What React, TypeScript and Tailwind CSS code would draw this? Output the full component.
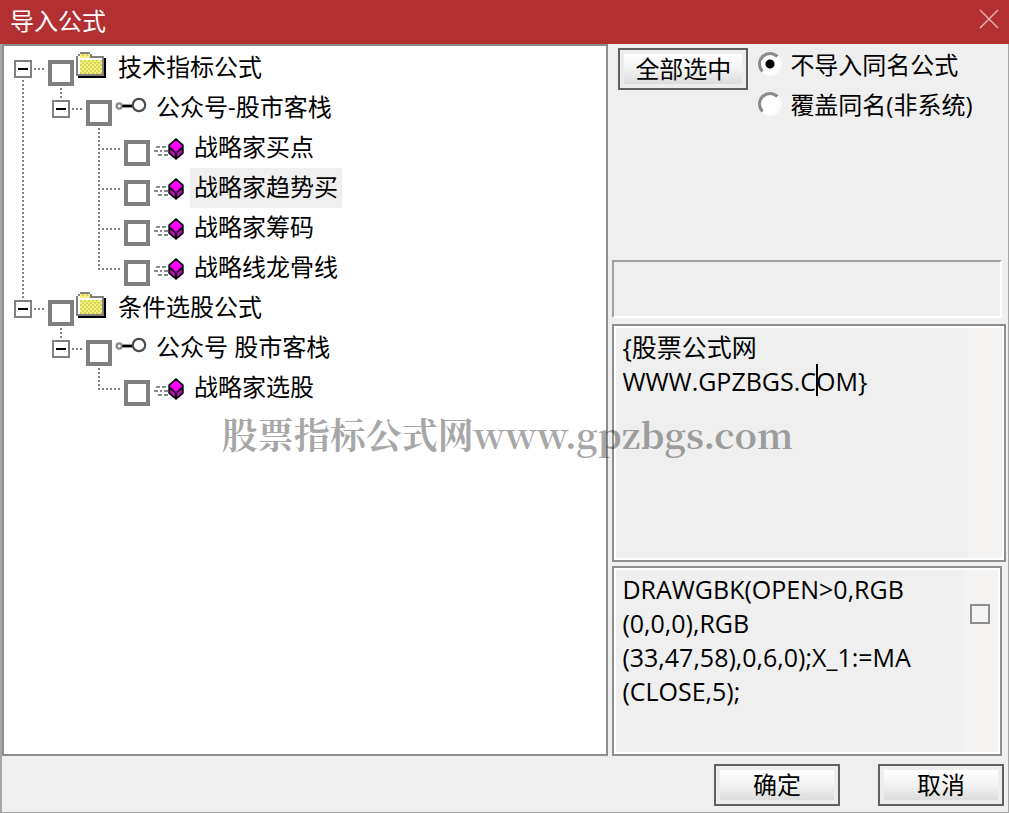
import React, { useState } from 'react';

type Kind = 'folder' | 'key' | 'gem';

interface TreeItem {
  id: string;
  label: string;
  kind: Kind;
  children?: TreeItem[];
}

const TREE: TreeItem[] = [
  {
    id: 'tech',
    label: '技术指标公式',
    kind: 'folder',
    children: [
      {
        id: 'tech-group',
        label: '公众号-股市客栈',
        kind: 'key',
        children: [
          { id: 'buy-point', label: '战略家买点', kind: 'gem' },
          { id: 'trend-buy', label: '战略家趋势买', kind: 'gem' },
          { id: 'chips', label: '战略家筹码', kind: 'gem' },
          { id: 'dragon-line', label: '战略线龙骨线', kind: 'gem' },
        ],
      },
    ],
  },
  {
    id: 'cond',
    label: '条件选股公式',
    kind: 'folder',
    children: [
      {
        id: 'cond-group',
        label: '公众号 股市客栈',
        kind: 'key',
        children: [{ id: 'pick', label: '战略家选股', kind: 'gem' }],
      },
    ],
  },
];

const FORMULA_NOTE = '{股票公式网\nWWW.GPZBGS.COM}';
const FORMULA_SOURCE = 'DRAWGBK(OPEN>0,RGB\n(0,0,0),RGB\n(33,47,58),0,6,0);X_1:=MA\n(CLOSE,5);';

const allIds = (items: TreeItem[]): string[] =>
  items.flatMap((item) => [item.id, ...allIds(item.children ?? [])]);

const FolderIcon = () => (
  <svg className="w-[38px] h-10 shrink-0" viewBox="0 0 19 20" shapeRendering="crispEdges" aria-hidden="true">
    <defs>
      <pattern id="dither" width="2" height="2" patternUnits="userSpaceOnUse">
        <rect width="2" height="2" fill="#f2f27c" />
        <rect width="1" height="1" fill="#d8d35c" />
        <rect x="1" y="1" width="1" height="1" fill="#d8d35c" />
      </pattern>
    </defs>
    <path d="M14 5h1v10H1v-1h13z" fill="#000" />
    <path d="M2 2h5v1h1v1h6v10H0V4h1V3h1z" fill="#808080" />
    <path d="M2 3h5v1H2z" fill="url(#dither)" />
    <path d="M1 4h6v1h6v1H1z" fill="#fff" />
    <path d="M2 4h5v1H2z" fill="#f2f27c" />
    <path d="M1 5h12v8H1z" fill="#fff" />
    <path d="M2 6h11v7H2z" fill="url(#dither)" />
  </svg>
);

const KeyIcon = () => (
  <svg className="w-[38px] h-10 shrink-0" viewBox="0 0 19 20" fill="none" aria-hidden="true">
    <circle cx="2.6" cy="9" r="1.3" stroke="#888" strokeWidth="1.1" />
    <path d="M4.2 9h5" stroke="#000" strokeWidth="1.4" />
    <circle cx="12.5" cy="8.5" r="3.1" stroke="#4c4c4c" strokeWidth="1.1" />
  </svg>
);

const GemIcon = () => (
  <svg className="w-[38px] h-10 shrink-0" viewBox="0 0 19 20" aria-hidden="true">
    <path
      d="M2 9h2v1H2zM5 9h2v1H5zM1 11h2v1H1zM4 11h1v1H4zM6 11h2v1H6zM3 13h2v1H3zM6 13h2v1H6z"
      fill="#8a8a8a"
      shapeRendering="crispEdges"
    />
    <path d="M12 5.6l3.4 3v4L12 15.4l-3.4-2.8v-4z" fill="#d000d0" />
    <path d="M12 5.6l3.4 3-3.4 3.6-3.4-3.6z" fill="#ff00ff" />
    <path
      d="M12 5.6l3.4 3v4L12 15.4l-3.4-2.8v-4zM9 9.8l3 3 3-3M12 12.8v2.4"
      fill="none"
      stroke="#000"
      strokeWidth="0.9"
    />
  </svg>
);

const ICONS: Record<Kind, () => React.ReactElement> = {
  folder: FolderIcon,
  key: KeyIcon,
  gem: GemIcon,
};

// One column of the tree's dotted connector lines
const Guide = ({ top, bottom, right }: { top?: boolean; bottom?: boolean; right?: boolean }) => (
  <svg
    className="w-[38px] h-10 shrink-0 overflow-visible"
    viewBox="0 0 38 40"
    stroke="#808080"
    strokeWidth="2"
    strokeDasharray="2 2"
    shapeRendering="crispEdges"
    aria-hidden="true"
  >
    {top && <path d="M19 0v22" />}
    {bottom && <path d="M19 20v20" />}
    {right && <path d="M22 21h20" />}
  </svg>
);

const Expander = ({ open, top, bottom }: { open: boolean; top: boolean; bottom: boolean }) => (
  <svg
    className="w-[38px] h-10 overflow-visible"
    viewBox="0 0 38 40"
    stroke="#808080"
    strokeWidth="2"
    fill="none"
    shapeRendering="crispEdges"
    aria-hidden="true"
  >
    {top && <path d="M19 0v10" strokeDasharray="2 2" />}
    {bottom && <path d="M19 32v8" strokeDasharray="2 2" />}
    <path d="M30 21h10" strokeDasharray="2 2" />
    <rect x="11" y="13" width="16" height="16" fill="#fff" />
    <path d="M14 21h10" stroke="#000" />
    {!open && <path d="M19 16v10" stroke="#000" />}
  </svg>
);

interface BranchProps {
  items: TreeItem[];
  // for every ancestor column: does its line run on below?
  lines: boolean[];
  checked: string[];
  closed: string[];
  selected: string;
  onCheck: (id: string) => void;
  onToggle: (id: string) => void;
  onSelect: (id: string) => void;
}

const Branch = (props: BranchProps) => {
  const { items, lines, checked, closed, selected, onCheck, onToggle, onSelect } = props;

  return (
    <ul>
      {items.map((item, i) => {
        const Icon = ICONS[item.kind];
        const open = !closed.includes(item.id);
        const last = i === items.length - 1;
        const hasTop = lines.length > 0 || i > 0;
        return (
          <li key={item.id}>
            <div className="flex h-10">
              {lines.map((line, n) => (
                <Guide key={n} top={line} bottom={line} />
              ))}
              {item.children ? (
                <button
                  type="button"
                  className="shrink-0"
                  aria-expanded={open}
                  aria-label={item.label}
                  onClick={() => onToggle(item.id)}
                >
                  <Expander open={open} top={hasTop} bottom={!last} />
                </button>
              ) : (
                <Guide top bottom={!last} right />
              )}
              <input
                type="checkbox"
                aria-label={item.label}
                checked={checked.includes(item.id)}
                onChange={() => onCheck(item.id)}
                className="appearance-none shrink-0 size-[26px] mt-3 ml-1.5 mr-0.5 border-4 border-[#808080] bg-white checked:bg-[#404040]"
              />
              <Icon />
              <button
                type="button"
                onClick={() => onSelect(item.id)}
                className={
                  selected === item.id
                    ? 'h-10 px-1 pb-0.5 whitespace-nowrap bg-[#efefef]'
                    : 'h-10 px-1 pb-0.5 whitespace-nowrap'
                }
              >
                {item.label}
              </button>
            </div>
            {item.children && open && (
              <Branch {...props} items={item.children} lines={[...lines, !last]} />
            )}
          </li>
        );
      })}
    </ul>
  );
};

const DialogButton = ({ children, onClick, className }: { children: string; onClick?: () => void; className: string }) => (
  <button
    type="button"
    onClick={onClick}
    className={`${className} h-[42px] shrink-0 border-2 border-[#606060] bg-[#ededeb] p-1`}
  >
    <span className="flex h-full items-center justify-center bg-linear-to-b from-white via-[#f2f2f2] to-[#dcdcdc]">
      {children}
    </span>
  </button>
);

const RADIO_CLASS =
  'appearance-none shrink-0 size-6 mt-1.5 rounded-full border-[3px] border-t-[#8c8c8c] border-l-[#8c8c8c] border-b-[#fafafa] border-r-[#fafafa] bg-white checked:bg-[radial-gradient(circle,#000_4px,#fff_5px)]';

const App = () => {
  const [checked, setChecked] = useState<string[]>([]);
  const [closed, setClosed] = useState<string[]>([]);
  const [selected, setSelected] = useState('trend-buy');
  const [mode, setMode] = useState('skip');

  const flip = (list: string[], id: string) =>
    list.includes(id) ? list.filter((x) => x !== id) : [...list, id];

  return (
    <div className="relative min-h-screen flex flex-col bg-[#efefef] text-black text-2xl font-['Open_Sans','Noto_Sans_CJK_SC',sans-serif]">
      {/* Title bar */}
      <header className="flex h-11 items-center justify-between bg-[#b22f32] pl-2.5 pr-2.5 text-white">
        <h1 className="pb-0.5">导入公式</h1>
        <button type="button" aria-label="关闭" className="-mt-1.5">
          <svg className="size-5" viewBox="0 0 20 20" stroke="#eab4b4" strokeWidth="1.4" aria-hidden="true">
            <path d="M1 1l18 18M19 1L1 19" />
          </svg>
        </button>
      </header>

      <div className="flex flex-1 flex-col border-l-2 border-r border-b border-[#a5a5a5]">
        <main className="flex flex-1 gap-1">
          {/* Formula tree */}
          <section className="flex-[606] min-w-0 border-2 border-[#8e8e8e] bg-white pt-0.5">
            <Branch
              items={TREE}
              lines={[]}
              checked={checked}
              closed={closed}
              selected={selected}
              onCheck={(id) => setChecked(flip(checked, id))}
              onToggle={(id) => setClosed(flip(closed, id))}
              onSelect={setSelected}
            />
          </section>

          <section className="flex flex-[396] min-w-0 flex-col pr-0.5">
            <div className="flex h-[216px] gap-2.5 pl-1.5 pt-0.5">
              <DialogButton className="w-[130px] mt-0.5" onClick={() => setChecked(allIds(TREE))}>
                全部选中
              </DialogButton>
              <div className="whitespace-nowrap">
                <label className="flex h-10 gap-2 leading-[38px]">
                  <input
                    type="radio"
                    name="mode"
                    checked={mode === 'skip'}
                    onChange={() => setMode('skip')}
                    className={RADIO_CLASS}
                  />
                  不导入同名公式
                </label>
                <label className="flex h-10 gap-2 leading-[38px]">
                  <input
                    type="radio"
                    name="mode"
                    checked={mode === 'overwrite'}
                    onChange={() => setMode('overwrite')}
                    className={RADIO_CLASS}
                  />
                  覆盖同名(非系统)
                </label>
              </div>
            </div>

            <div className="h-[58px] mr-1 border-2 border-t-[#a0a0a0] border-l-[#a0a0a0] border-b-white border-r-white" />

            {/* Note */}
            <div className="relative flex flex-[238] mt-1.5 border-2 border-[#8e8e8e]">
              <div className="flex flex-1 border-2 border-white">
                <textarea
                  aria-label="公式说明"
                  defaultValue={FORMULA_NOTE}
                  spellCheck={false}
                  className="flex-1 min-w-0 resize-none overflow-hidden bg-transparent pl-1.5 pt-0.5 text-[25px] leading-[34px] outline-none"
                />
                <div className="w-[34px] bg-[#f4f3f2]" />
              </div>
              <div className="absolute left-[202px] top-[38px] h-8 w-0.5 bg-black" />
            </div>

            {/* Source */}
            <div className="flex flex-[190] mt-1 mr-1 border-2 border-[#8e8e8e]">
              <div className="flex flex-1 border-2 border-white">
                <textarea
                  aria-label="公式源码"
                  defaultValue={FORMULA_SOURCE}
                  spellCheck={false}
                  className="flex-1 min-w-0 resize-none overflow-hidden bg-transparent pl-1.5 pt-0.5 text-[25px] leading-[34px] outline-none"
                />
                <div className="w-[34px] bg-[#f4f3f2] pl-1.5 pt-[34px]">
                  <div className="size-5 border-2 border-[#8e8e8e]" />
                </div>
              </div>
            </div>
          </section>
        </main>

        <footer className="flex justify-end gap-[38px] pt-2 pb-1.5 pr-1">
          <DialogButton className="w-[126px]">确定</DialogButton>
          <DialogButton className="w-[126px]">取消</DialogButton>
        </footer>
      </div>

      {/* Watermark */}
      <div className="pointer-events-none absolute inset-0 flex items-center justify-center pl-1.5 pt-[54px] whitespace-nowrap text-4xl font-bold text-black/35 font-['Noto_Serif_CJK_SC','Noto_Sans_CJK_SC',serif]">
        股票指标公式网www.gpzbgs.com
      </div>
    </div>
  );
};

export default App;
